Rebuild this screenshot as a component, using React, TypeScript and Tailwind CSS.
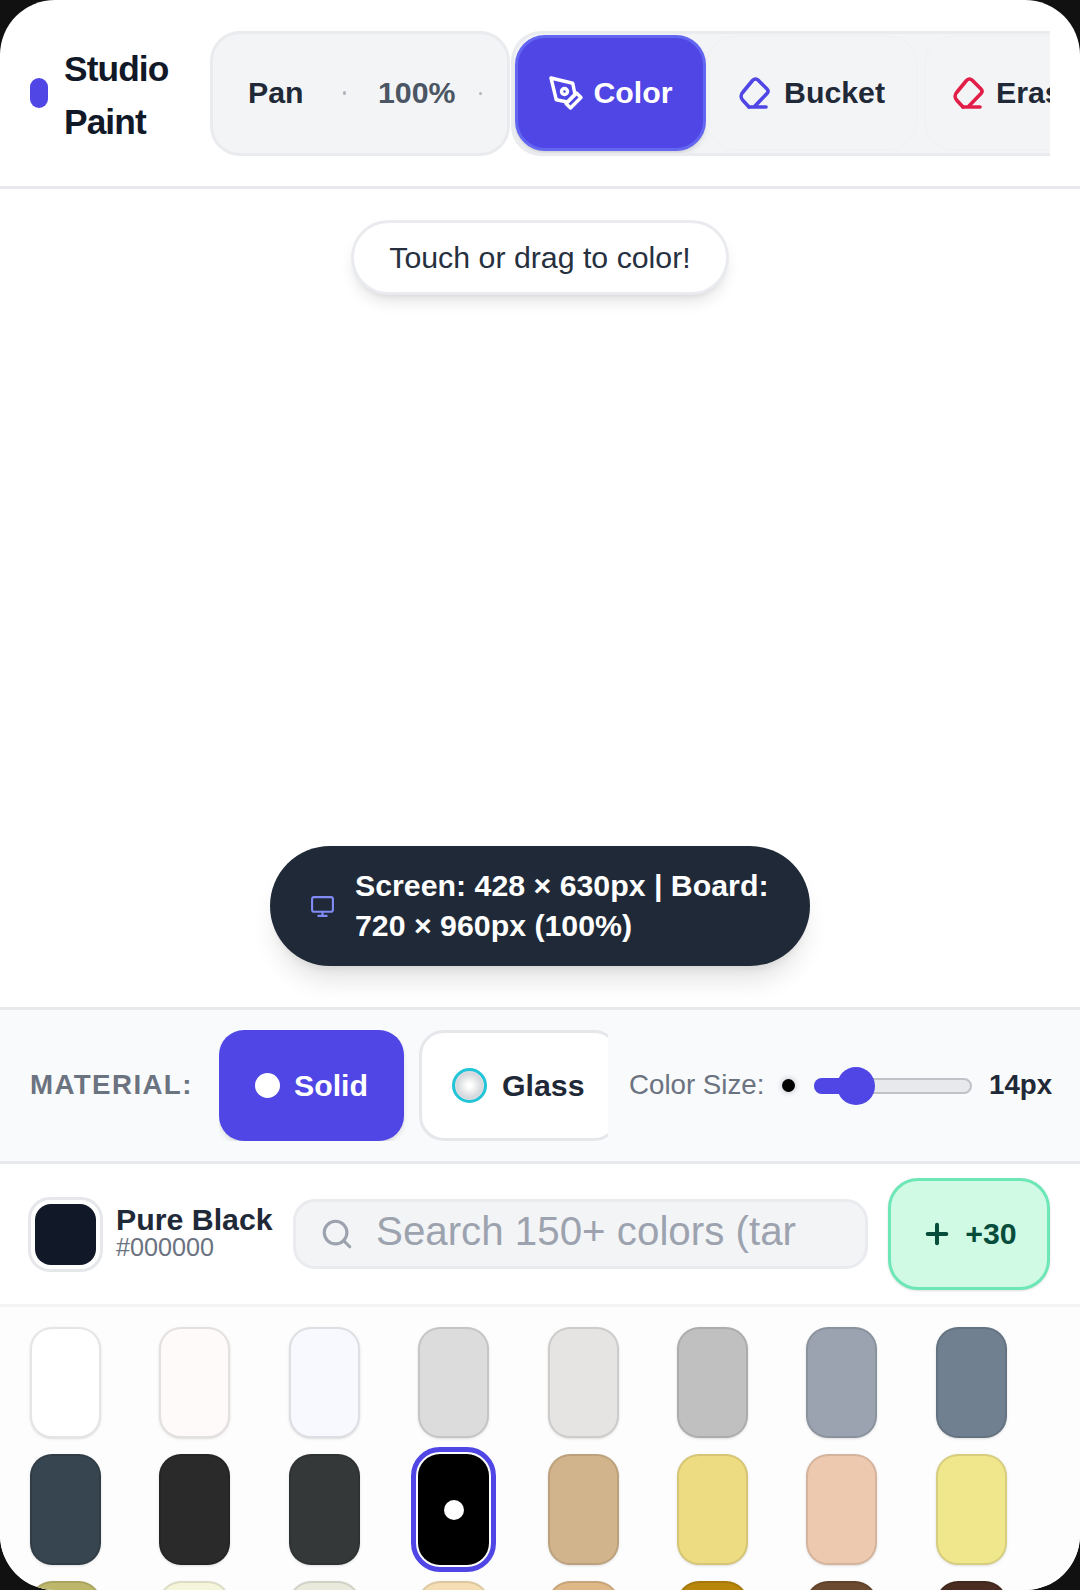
import { Monitor, Plus, Search } from "lucide-react";

const font = "[font-family:'Liberation_Sans',Arial,sans-serif]";

const swatches = [
  "#ffffff", "#fffafa", "#f8f8ff", "#dcdcdc", "#e5e4e2", "#c0c0c0", "#9aa3af", "#708090",
  "#36454f", "#2a2a2a", "#353839", "#000000", "#d2b48c", "#eedc82", "#edc9af", "#f0e68c",
  "#bdb76b", "#f5f5dc", "#e9e9dc", "#f5deb3", "#deb887", "#b8860b", "#6b4a30", "#4a2c20",
];

function PenIcon({ className }: { className: string }) {
  return (
    <svg viewBox="0 0 24 24" fill="none" stroke="currentColor" strokeWidth="2.3" strokeLinecap="round" strokeLinejoin="round" className={className}>
      <path d="m12 19 7-7 3 3-7 7-3-3z" />
      <path d="m18 13-1.5-7.5L2 2l3.5 14.5L13 18l5-5z" />
      <circle cx="11" cy="11" r="2" />
    </svg>
  );
}

function EraserIcon({ className }: { className: string }) {
  return (
    <svg viewBox="0 0 32 34" fill="none" stroke="currentColor" strokeWidth="3.6" strokeLinecap="round" strokeLinejoin="round" className={className}>
      <path d="M10 31 4 24.5C1.5 22 1.5 18.5 4 16L13.5 4.5C15 2.5 17.5 2.5 19 4L28 13C29.5 14.5 29.5 16 28 17.5L16 30" />
      <path d="M10 31H27" />
    </svg>
  );
}

export default function App() {
  return (
    <div className={`h-[1590px] w-[1080px] overflow-hidden bg-[#111111] ${font}`}>
      <div className="relative flex h-full flex-col overflow-hidden rounded-[55px] bg-white">
        <header className="flex h-[189px] shrink-0 items-center border-b-[3px] border-[#e8e9ec] pl-[30px] pr-[30px]">
          <div className="flex w-[180px] shrink-0 items-center gap-[16px]">
            <div className="h-[30px] w-[18px] shrink-0 rounded-full bg-[#4f46e5]" />
            <h1 className="pt-[4px] text-[35.3px] font-bold leading-[53px] tracking-[-0.9px] text-[#111827]">
              Studio
              <br />
              Paint
            </h1>
          </div>
          <div className="flex h-[125px] w-[300px] shrink-0 items-center rounded-[30px] border-[3px] border-[#e9ebee] bg-[#f3f4f6] pl-[35px]">
            <span className="w-[95px] text-[30.3px] font-bold text-[#1f2937]">Pan</span>
            <span className="h-1 w-[3px] rounded-full bg-[#b0b5bd]" />
            <span className="ml-[32px] w-[103px] text-[30.3px] font-bold text-[#4b5563]">100%</span>
            <span className="-ml-[2px] h-[3px] w-[3px] rounded-full bg-[#b0b5bd]" />
          </div>
          <div className="ml-px flex h-[125px] min-w-0 flex-1 items-center overflow-hidden rounded-l-[30px] border-y-[3px] border-l-[3px] border-[#e9ebee] bg-[#f3f4f6] pl-px">
            <button className="flex h-[116px] w-[191px] shrink-0 items-center justify-center gap-[9px] rounded-[30px] border-[3px] border-[#6366f1] bg-[#4f46e5] text-[30.3px] font-bold text-white shadow-md">
              <PenIcon className="h-[36px] w-[36px]" />
              Color
            </button>
            <button className="flex h-[116px] w-[212px] shrink-0 items-center gap-[13px] rounded-[30px] border-[2px] border-[#f1f2f4] pl-[31px] text-[30.3px] font-bold text-[#1f2937]">
              <EraserIcon className="h-[34px] w-[32px] text-[#4f46e5]" />
              Bucket
            </button>
            <button className="ml-[6px] flex h-[116px] shrink-0 items-center gap-[11px] rounded-[30px] border-[2px] border-[#f1f2f4] pl-[27px] text-[30.3px] font-bold text-[#1f2937]">
              <EraserIcon className="h-[34px] w-[32px] text-[#e11d48]" />
              Eraser
            </button>
          </div>
        </header>

        <main className="relative min-h-0 flex-1 bg-white">
          <div className="absolute left-[351px] top-[31px] flex h-[75px] w-[378px] items-center justify-center rounded-full border-[3px] border-[#e9ebee] bg-white text-[30.3px] text-[#27303f] shadow-lg">
            Touch or drag to color!
          </div>
          <div className="absolute bottom-[41px] left-[270px] flex h-[120px] w-[540px] items-center gap-[20px] rounded-full bg-[#1f2937] pl-[40px] text-[30.3px] font-semibold leading-[40px] text-white shadow-xl">
            <Monitor className="h-[25px] w-[25px] shrink-0 text-[#818cf8]" />
            <span>
              Screen: 428 × 630px | Board:
              <br />
              720 × 960px (100%)
            </span>
          </div>
        </main>

        <section className="flex h-[157px] shrink-0 items-center border-y-[3px] border-[#e8e9ec] bg-[#f9fafc] pl-[30px]">
          <span className="mb-[2px] w-[189px] shrink-0 text-[27.7px] font-bold tracking-[1.4px] text-[#6b7280]">MATERIAL:</span>
          <div className="flex w-[389px] shrink-0 gap-[15px] overflow-hidden">
            <button className="flex h-[111px] w-[185px] shrink-0 items-center justify-center gap-[14px] rounded-[25px] bg-[#4f46e5] text-[30.3px] font-bold text-white shadow-md">
              <span className="h-[25px] w-[25px] rounded-full bg-white" />
              Solid
            </button>
            <button className="flex h-[111px] w-[200px] shrink-0 items-center gap-[15px] rounded-[25px] border-[3px] border-[#e5e7eb] bg-white pl-[30px] text-[30.3px] font-bold text-[#1f2937]">
              <span className="h-[35px] w-[35px] rounded-full border-[3px] border-[#22c4d8] bg-[radial-gradient(circle,#ffffff_10%,#d5d8dc_60%,#eef0f2_100%)]" />
              Glass
            </button>
          </div>
          <span className="mb-[2px] ml-[21px] w-[136px] shrink-0 text-[27.7px] text-[#6b7280]">Color Size:</span>
          <span className="ml-[17px] h-[13px] w-[13px] shrink-0 rounded-full bg-black shadow-[0_0_4px_2px_#d9dbdf]" />
          <div className="relative ml-[19px] h-[16px] w-[158px] shrink-0 rounded-full border-[2px] border-[#bfc2c7] bg-[#e8e9ec]">
            <div className="absolute -left-[2px] -top-[2px] h-[16px] w-[42px] rounded-full bg-[#4f46e5]" />
            <div className="absolute left-[21px] top-[-13px] h-[38px] w-[38px] rounded-full bg-[#4f46e5]" />
          </div>
          <span className="mb-[2px] ml-[17px] shrink-0 text-[27.7px] font-bold text-[#1f2937]">14px</span>
        </section>

        <section className="flex h-[143px] shrink-0 items-center border-b-[3px] border-[#f3f4f6] pl-[28px] pr-[30px]">
          <div className="h-[75px] w-[75px] shrink-0 rounded-[22px] border-[3px] border-[#e5e7eb] bg-white p-[4px]">
            <div className="h-full w-full rounded-[16px] bg-[#111827]" />
          </div>
          <div className="-mt-[3px] ml-[13px] w-[177px] shrink-0">
            <div className="text-[30.3px] font-bold leading-[30px] text-[#1f2937]">Pure Black</div>
            <div className="text-[25.2px] leading-[25px] text-[#6b7280]">#000000</div>
          </div>
          <div className="flex h-[70px] w-[575px] shrink-0 items-center gap-[22px] overflow-hidden rounded-[22px] border-[3px] border-[#e9ebee] bg-[#f3f4f6] pl-[24px]">
            <Search className="h-[34px] w-[34px] shrink-0 text-[#9ca3af]" strokeWidth={2.2} />
            <span className="whitespace-nowrap pb-[4px] text-[40.3px] text-[#9ca3af]">Search 150+ colors (tar</span>
          </div>
          <button className="ml-[20px] flex h-[112px] w-[162px] shrink-0 items-center justify-center gap-[12px] rounded-[30px] border-[3px] border-[#6ee7b7] bg-[#d1fae5] text-[30.3px] font-bold text-[#064e3b] shadow-sm">
            <Plus className="h-[32px] w-[32px]" strokeWidth={3} />
            +30
          </button>
        </section>

        <section className="grid h-[283px] shrink-0 grid-cols-[repeat(8,129.4px)] content-start gap-y-[16px] bg-[#fdfdfd] pl-[30px] pt-[20px]">
          {swatches.map((color) =>
            color === "#000000" ? (
              <div key={color} className="relative flex h-[111px] w-[71px] items-center justify-center rounded-[22px] bg-black outline-[5px] outline-offset-[2px] outline-[#4f46e5]">
                <span className="h-5 w-5 rounded-full bg-white" />
              </div>
            ) : (
              <div
                key={color}
                className="h-[111px] w-[71px] rounded-[22px] border-[2.5px] border-black/10 shadow-sm"
                style={{ backgroundColor: color }}
              />
            ),
          )}
        </section>
      </div>
    </div>
  );
}
